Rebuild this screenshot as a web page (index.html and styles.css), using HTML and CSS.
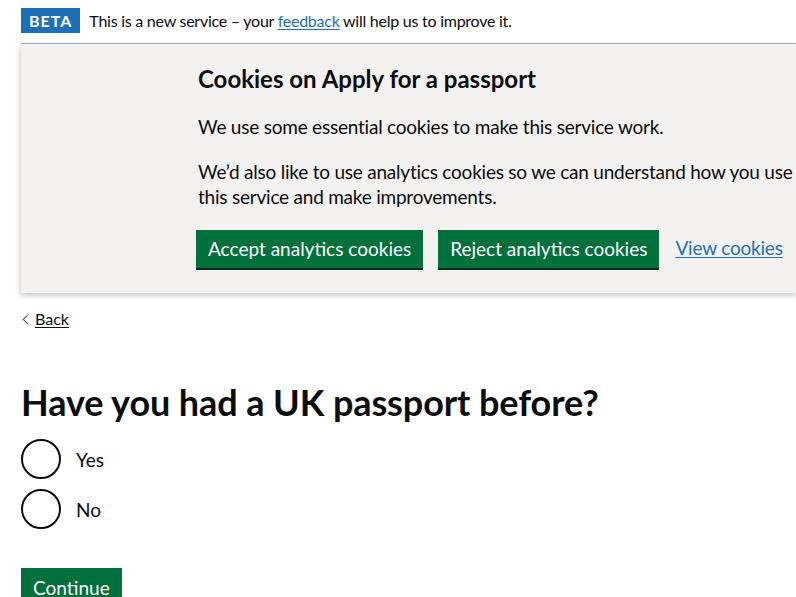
FILE: index.html
```html
<!DOCTYPE html>
<html lang="en">
<head>
<meta charset="utf-8">
<title>Apply for a passport</title>
<link rel="stylesheet" href="styles.css">
</head>
<body>
<div class="phase-banner">
  <strong class="tag">BETA</strong>
  <span class="phase-text">This is a new service – your <a href="#" class="link">feedback</a> will help us to improve it.</span>
</div>
<div class="cookie-banner">
  <div class="cookie-inner">
    <h2 class="cookie-title">Cookies on Apply for a passport</h2>
    <p class="cookie-text">We use some essential cookies to make this service work.</p>
    <p class="cookie-text">We’d also like to use analytics cookies so we can understand how you use this service and make improvements.</p>
    <div class="button-group">
      <button class="button">Accept analytics cookies</button>
      <button class="button">Reject analytics cookies</button>
      <a href="#" class="link cookie-link">View cookies</a>
    </div>
  </div>
</div>
<div class="container">
  <a href="#" class="back-link">Back</a>
  <main class="main">
    <h1 class="heading">Have you had a UK passport before?</h1>
    <div class="radios">
      <label class="radio"><span class="radio-circle"></span><span class="radio-label">Yes</span></label>
      <label class="radio"><span class="radio-circle"></span><span class="radio-label">No</span></label>
    </div>
    <button class="button continue">Continue</button>
  </main>
</div>
</body>
</html>
```

FILE: styles.css
```css
html, body {
  margin: 0;
  padding: 0;
  background: #ffffff;
  overflow: hidden;
}
body {
  font-family: Lato, "Liberation Sans", sans-serif;
  color: #0b0c0c;
}
.link {
  color: #1d70b8;
  text-decoration: underline;
  text-underline-offset: 2px;
}
.phase-banner {
  margin-left: 21px;
  padding: 8px 0 10px;
  border-bottom: 1px solid #b1b4b6;
  display: flex;
  align-items: center;
  gap: 9px;
}
.tag {
  display: inline-block;
  background: #1d70b8;
  color: #ffffff;
  font-size: 16px;
  font-weight: 700;
  letter-spacing: 1px;
  line-height: 25px;
  height: 25px;
  padding: 0 8px;
}
.phase-text {
  font-size: 16px;
  line-height: 20px;
  letter-spacing: -0.25px;
}
.cookie-banner {
  margin-left: 21px;
  background: #f3f2f1;
  box-shadow: 0 2px 6px rgba(0, 0, 0, 0.25);
  padding: 20px 0 23px 175px;
}
.cookie-inner {
  width: 600px;
}
.cookie-title {
  margin: 0 0 20px;
  font-size: 24px;
  line-height: 30px;
  font-weight: 700;
  padding-left: 2px;
}
.cookie-text {
  margin: 0 0 20px;
  font-size: 19px;
  line-height: 25px;
  letter-spacing: -0.22px;
  padding-left: 2px;
}
.button-group {
  display: flex;
  align-items: flex-start;
  gap: 15px;
  margin-top: 21px;
  white-space: nowrap;
}
.button {
  font-family: inherit;
  font-size: 19px;
  line-height: 22px;
  color: #ffffff;
  background: #00703c;
  border: 0;
  border-radius: 0;
  box-shadow: 0 2px 0 #002d18;
  padding: 8px 12px;
  height: 38px;
  margin-bottom: 2px;
  white-space: nowrap;
  flex-shrink: 0;
  cursor: pointer;
}
.cookie-link {
  font-size: 19px;
  line-height: 22px;
  margin-top: 7px;
  margin-left: 1px;
  letter-spacing: -0.2px;
  flex-shrink: 0;
}
.container {
  margin-left: 21px;
}
.back-link {
  display: inline-block;
  margin-top: 16px;
  font-size: 16px;
  line-height: 20px;
  color: #0b0c0c;
  text-decoration: underline;
  text-underline-offset: 2px;
  padding-left: 14px;
  position: relative;
}
.back-link::before {
  content: "";
  position: absolute;
  left: 3px;
  top: 7px;
  width: 6px;
  height: 6px;
  border-left: 1px solid #505a5f;
  border-bottom: 1px solid #505a5f;
  transform: rotate(45deg);
}
.main {
  padding-top: 53px;
}
.heading {
  margin: 0 0 17px;
  font-size: 36px;
  line-height: 40px;
  font-weight: 700;
  letter-spacing: -0.1px;
}
.radios {
  display: flex;
  flex-direction: column;
  gap: 10px;
}
.radio {
  display: flex;
  align-items: center;
  gap: 15px;
}
.radio-circle {
  box-sizing: border-box;
  width: 40px;
  height: 40px;
  border: 2px solid #0b0c0c;
  border-radius: 50%;
}
.radio-label {
  font-size: 19px;
  line-height: 25px;
}
.continue {
  margin-top: 39px;
  padding-top: 9px;
}
```
